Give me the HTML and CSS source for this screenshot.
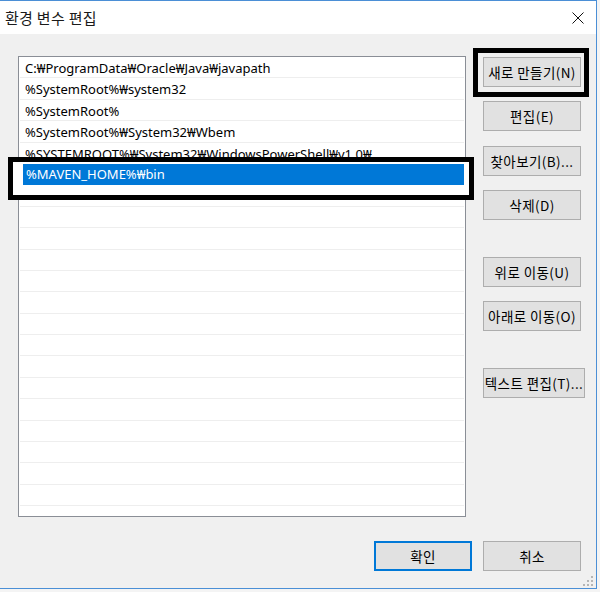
FILE: index.html
```html
<!DOCTYPE html>
<html>
    <head>
        <meta charset="utf-8">
        <title>환경 변수 편집</title>
        <link rel="stylesheet" href="styles.css">
    </head>
    <body>
        <div class="window">
            <div class="titlebar">
                <span class="title">환경 변수 편집</span>
                <svg class="close" width="12" height="12" viewBox="0 0 12 12">
                    <path d="M0.5 0.5 L11.5 11.5 M11.5 0.5 L0.5 11.5" stroke="#111" stroke-width="1" fill="none"/>
                </svg>
            </div>
            <div class="content">
                <div class="main">
                    <div class="list">
                        <div class="row">C:₩ProgramData₩Oracle₩Java₩javapath</div>
                        <div class="row">%SystemRoot%₩system32</div>
                        <div class="row">%SystemRoot%</div>
                        <div class="row">%SystemRoot%₩System32₩Wbem</div>
                        <div class="row">%SYSTEMROOT%₩System32₩WindowsPowerShell₩v1.0₩</div>
                        <div class="row"></div>
                        <div class="row"></div>
                        <div class="row"></div>
                        <div class="row"></div>
                        <div class="row"></div>
                        <div class="row"></div>
                        <div class="row"></div>
                        <div class="row"></div>
                        <div class="row"></div>
                        <div class="row"></div>
                        <div class="row"></div>
                        <div class="row"></div>
                        <div class="row"></div>
                        <div class="row"></div>
                        <div class="row"></div>
                        <div class="row"></div>
                        <div class="row"></div>
                    </div>
                    <div class="side">
                        <button class="btn">새로 만들기(N)</button>
                        <button class="btn">편집(E)</button>
                        <button class="btn step">찾아보기(B)...</button>
                        <button class="btn">삭제(D)</button>
                        <button class="btn group">위로 이동(U)</button>
                        <button class="btn">아래로 이동(O)</button>
                        <button class="btn group wide">텍스트 편집(T)...</button>
                    </div>
                </div>
                <div class="footer">
                    <button class="btn default">확인</button>
                    <button class="btn">취소</button>
                </div>
            </div>
            <div class="mark mark-new"></div>
            <div class="mark mark-edit">
                <div class="edit-row">%MAVEN_HOME%₩bin</div>
            </div>
            <svg class="grip" width="12" height="12" viewBox="0 0 12 12">
                <rect x="9" y="1" width="2" height="2" fill="#b5b5b5"/>
                <rect x="5" y="5" width="2" height="2" fill="#b5b5b5"/>
                <rect x="9" y="5" width="2" height="2" fill="#b5b5b5"/>
                <rect x="1" y="9" width="2" height="2" fill="#b5b5b5"/>
                <rect x="5" y="9" width="2" height="2" fill="#b5b5b5"/>
                <rect x="9" y="9" width="2" height="2" fill="#b5b5b5"/>
            </svg>
        </div>
    </body>
</html>
```

FILE: styles.css
```css
body {
    margin: 0;
    width: 600px;
    height: 592px;
    background-color: #f4f4f4;
    font-family: "Noto Sans CJK KR", "Noto Sans", sans-serif;
    overflow: hidden;
}
.window {
    position: relative;
    width: 596px;
    height: 587px;
    border-top: 1px solid #4b8fd6;
    border-right: 1px solid #4b8fd6;
    border-bottom: 1px solid #4b8fd6;
    background-color: #f0f0f0;
}
.titlebar {
    height: 33px;
    background-color: #ffffff;
    display: flex;
    align-items: center;
    justify-content: space-between;
    padding-left: 5px;
    padding-right: 12px;
}
.title {
    font-size: 15px;
    color: #1a1a1a;
    letter-spacing: 0.3px;
}
.close {
    display: block;
}
.content {
    padding: 22px 15px 0 18px;
}
.main {
    display: flex;
    gap: 17px;
}
.list {
    box-sizing: border-box;
    flex-shrink: 0;
    width: 448px;
    height: 461px;
    border: 1px solid #8a8e96;
    background-color: #ffffff;
    overflow: hidden;
}
.row {
    box-sizing: border-box;
    height: 21.4px;
    margin: 0 1px;
    padding-left: 5px;
    border-bottom: 1px solid #eeeeee;
    font-family: "Noto Sans", sans-serif;
    font-size: 13px;
    line-height: 22px;
    color: #000000;
    white-space: nowrap;
}
.side {
    width: 98px;
    flex-shrink: 0;
    padding-top: 1px;
    display: flex;
    flex-direction: column;
    align-items: flex-start;
    gap: 14px;
}
.btn {
    box-sizing: border-box;
    flex-shrink: 0;
    width: 98px;
    height: 30px;
    padding: 0;
    background-color: #e1e1e1;
    border: 1px solid #adadad;
    font-family: "Noto Sans CJK KR", sans-serif;
    font-size: 13.5px;
    letter-spacing: 0.4px;
    color: #000000;
    white-space: nowrap;
}
.step {
    margin-top: 1px;
}
.group {
    margin-top: 23px;
}
.wide {
    width: 102px;
}
.footer {
    margin-top: 24px;
    display: flex;
    justify-content: flex-end;
    gap: 11px;
}
.default {
    border: 2px solid #0078d7;
}
.mark {
    position: absolute;
    box-sizing: border-box;
    border: 5px solid #000000;
}
.mark-new {
    left: 473px;
    top: 47px;
    width: 116px;
    height: 49px;
}
.mark-edit {
    left: 8px;
    top: 156px;
    width: 466px;
    height: 43px;
    background-color: #ffffff;
    padding: 2px 5px 0 10px;
}
.edit-row {
    height: 21px;
    padding-left: 3px;
    background-color: #0078d7;
    color: #ffffff;
    font-family: "Noto Sans", sans-serif;
    font-size: 13px;
    line-height: 21px;
    white-space: nowrap;
}
.grip {
    position: absolute;
    right: 2px;
    bottom: 1px;
}
```
